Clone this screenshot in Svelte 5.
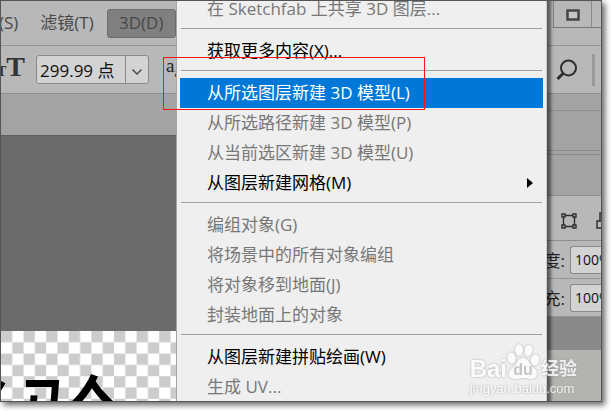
<script lang="ts">
  type Item = { label: string; enabled?: boolean; active?: boolean; submenu?: boolean };

  const groups: Item[][] = [
    [{ label: '在 Sketchfab 上共享 3D 图层...' }],
    [{ label: '获取更多内容(X)...', enabled: true }],
    [
      { label: '从所选图层新建 3D 模型(L)', enabled: true, active: true },
      { label: '从所选路径新建 3D 模型(P)' },
      { label: '从当前选区新建 3D 模型(U)' },
      { label: '从图层新建网格(M)', enabled: true, submenu: true },
    ],
    [
      { label: '编组对象(G)' },
      { label: '将场景中的所有对象编组' },
      { label: '将对象移到地面(J)' },
      { label: '封装地面上的对象' },
    ],
    [{ label: '从图层新建拼贴绘画(W)', enabled: true }, { label: '生成 UV...' }],
  ];

  let size = $state('299.99 点');
  let opacity = $state('100%');
  let fill = $state('100%');
</script>

<div class="window">
  <header class="menubar">
    <nav>
      <button class="top">(S)</button>
      <button class="top">滤镜(T)</button>
      <button class="top open">3D(D)</button>
    </nav>
    <div class="caption">
      <button class="restore" aria-label="还原">
        <svg width="14" height="12" viewBox="0 0 14 12">
          <rect x="1.5" y="1.5" width="11" height="9" fill="#c4c4c4" stroke="#444" stroke-width="2.500" />
        </svg>
      </button>
      <span class="edge"></span>
    </div>
  </header>

  <div class="options">
    <span class="type-icon"><small>T</small>T</span>
    <div class="combo">
      <input aria-label="字体大小" bind:value={size} />
      <button aria-label="选择字体大小">
        <svg width="12" height="8" viewBox="0 0 12 8">
          <path d="M1.500 1.500 6 6l4.500-4.500" fill="none" stroke="#444" stroke-width="1.400" />
        </svg>
      </button>
    </div>
    <span class="aa">a<sub>a</sub></span>
    <button class="search" aria-label="搜索">
      <svg width="22" height="22" viewBox="0 0 22 22" fill="none" stroke="#2e2e2e">
        <circle cx="12.500" cy="9" r="7.500" stroke-width="2" />
        <path d="M7 14.500 1.500 20" stroke-width="3" />
      </svg>
    </button>
    <span class="divider"></span>
  </div>

  <div class="body">
    <main>
      <div class="tabs"></div>
      <div class="stage"></div>
      <svg class="artboard" width="100%" height="70">
        <defs>
          <pattern id="checker" width="22.6" height="22.6" patternUnits="userSpaceOnUse">
            <rect width="22.6" height="22.6" fill="#fff" />
            <rect width="11.3" height="11.3" fill="#ccc" />
            <rect x="11.3" y="11.3" width="11.3" height="11.3" fill="#ccc" />
          </pattern>
        </defs>
        <rect width="100%" height="100%" fill="url(#checker)" />
        <text x="-92 18" y="135">经验</text>
      </svg>
    </main>

    <aside>
      <div class="panel-gap"></div>
      <div class="panel-empty"></div>
      <div class="panel-head"></div>
      <div class="filters">
        <svg width="16" height="16" viewBox="0 0 16 16" fill="#b8b8b8" stroke="#2e2e2e" stroke-width="1.400">
          <path d="M2.500 2.500h11v11h-11z" />
          <path d="M1 1h3v3H1zM12 1h3v3h-3zM1 12h3v3H1zM12 12h3v3h-3z" />
        </svg>
        <svg width="16" height="18" viewBox="0 0 16 18" fill="none" stroke="#2e2e2e" stroke-width="1.500">
          <path d="M4 9V1h7l4 4v11H9" />
          <path d="M1 9h7v7H1z" />
        </svg>
      </div>
      <div class="field">
        <label for="opacity">度:</label>
        <input id="opacity" bind:value={opacity} />
      </div>
      <div class="field">
        <label for="fill">充:</label>
        <input id="fill" bind:value={fill} />
      </div>
      <div class="list-head"></div>
      <div class="list"></div>
    </aside>
  </div>

  <div class="menu" role="menu">
    {#each groups as group, i}
      {#if i > 0}<hr />{/if}
      {#each group as item}
        <button class="item" class:active={item.active} role="menuitem" disabled={!item.enabled}>
          {item.label}
          {#if item.submenu}
            <svg width="6" height="10" viewBox="0 0 6 10"><path d="M0 0l6 5-6 5z" /></svg>
          {/if}
        </button>
      {/each}
    {/each}
  </div>

  <div class="marker"></div>

  <div class="watermark">
    <div class="brand">
      <span>Bai</span>
      <span class="paw">
        <svg width="32" height="36" viewBox="0 0 32 36" fill="#fff">
          <ellipse cx="4.500" cy="14" rx="4" ry="5.500" transform="rotate(-12 4.500 14)" />
          <ellipse cx="12" cy="6" rx="4" ry="5.800" />
          <ellipse cx="21.500" cy="6.500" rx="4" ry="5.500" transform="rotate(12 21.500 6.500)" />
          <ellipse cx="28" cy="16" rx="4" ry="5.500" transform="rotate(12 28 16)" />
          <path d="M16 14c4 0 5 3 7 6s7 5 7 9.500-4 6-7 5.500-4-1-7-1-4 .5-7 1-7-1-7-5.500 5-6.500 7-9.500 3-6 7-6z" />
        </svg>
        <b>du</b>
      </span>
      <span class="cn">经验</span>
    </div>
    <div class="site">jingyan.baidu.com</div>
  </div>
</div>

<style>
  :global(body) {
    background: #fff;
    font-family: "Open Sans", "Noto Sans CJK SC", sans-serif;
    font-size: 17px;
  }

  button,
  input {
    font: inherit;
    color: inherit;
    background: none;
    border: 0;
    padding: 0;
    margin: 0;
    box-sizing: border-box;
  }

  .window {
    position: relative;
    display: flex;
    flex-direction: column;
    box-sizing: border-box;
    height: calc(100vh - 9px);
    margin: 0 9px 9px 0;
    border: 1px solid #555;
    box-shadow: 3px 3px 6px rgba(0, 0, 0, 0.6);
    background: #b8b8b8;
    overflow: hidden;
  }

  .menubar {
    display: flex;
    justify-content: space-between;
    height: 45px;
    flex: none;
    box-sizing: border-box;
    border-bottom: 1px solid #949494;
    color: #484848;
  }

  nav {
    display: flex;
    align-items: center;
    margin-left: -4px;
  }

  .top {
    height: 29px;
    margin-right: 12px;
    line-height: 24px;
    white-space: nowrap;
  }

  .top:first-child {
    padding-left: 2px;
  }

  .top:nth-child(2) {
    padding-left: 10px;
  }

  .open {
    width: 69px;
    margin-left: 1px;
    border: 1px solid #6c6c6c;
    border-radius: 3px;
    background: #808080;
  }

  .caption {
    display: flex;
    height: 27px;
    box-sizing: border-box;
    border-bottom: 1px solid #777;
  }

  .restore {
    width: 39px;
    display: flex;
    align-items: center;
    justify-content: center;
    padding-top: 2px;
    border-left: 1px solid #888;
    border-right: 1px solid #888;
  }

  .edge {
    width: 9px;
  }

  .options {
    display: flex;
    align-items: center;
    height: 48px;
    flex: none;
    box-sizing: border-box;
    border-bottom: 1px solid #8e8e8e;
  }

  .type-icon {
    width: 35px;
    margin-left: -4px;
    box-sizing: border-box;
    font: bold 28px/30px "Liberation Serif", serif;
    color: #333;
    white-space: nowrap;
  }

  .type-icon small {
    font-size: 14px;
  }

  .combo {
    display: flex;
    width: 113px;
    height: 29px;
    margin-left: 4px;
    box-sizing: border-box;
    border: 1px solid #8a8a8a;
    border-radius: 3px;
    background: #d3d3d3;
    color: #111;
  }

  .combo input {
    flex: 1;
    min-width: 0;
    padding-left: 3px;
  }

  .combo button {
    width: 23px;
    border-left: 1px solid #8a8a8a;
  }

  .aa {
    margin-left: 17px;
    font: 19px/24px "Liberation Serif", serif;
    color: #222;
  }

  .aa sub {
    font-size: 14px;
  }

  .search {
    height: 22px;
    margin-left: auto;
  }

  .divider {
    width: 3px;
    height: 32px;
    margin: 0 6px 0 14px;
    background: #999;
  }

  .body {
    display: flex;
    flex: 1;
    min-height: 0;
  }

  main {
    flex: 1;
    display: flex;
    flex-direction: column;
    min-width: 0;
  }

  .tabs {
    height: 41px;
    background: #a3a3a3;
    border-bottom: 1px solid #5e5e5e;
  }

  .stage {
    flex: 1;
    background: #6b6b6b;
  }

  .artboard {
    display: block;
    flex: none;
  }

  .artboard text {
    font-family: "Noto Sans CJK SC", sans-serif;
    font-size: 108px;
    font-weight: 400;
  }

  aside {
    width: 72px;
    display: flex;
    flex-direction: column;
    background: #a3a3a3;
  }

  .panel-gap {
    height: 16px;
    border-bottom: 1px solid #8e8e8e;
  }

  .panel-empty {
    height: 39px;
    border-bottom: 1px solid #8a8a8a;
  }

  .panel-head {
    height: 40px;
    margin-top: 3px;
    border-top: 1px solid #8a8a8a;
    border-bottom: 1px solid #8e8e8e;
  }

  .filters {
    display: flex;
    align-items: center;
    gap: 19px;
    height: 45px;
    padding-left: 32px;
    padding-top: 5px;
    box-sizing: border-box;
    overflow: hidden;
    background: #b8b8b8;
    border-bottom: 1px solid #8e8e8e;
  }

  .filters svg {
    flex: none;
  }

  .field {
    display: flex;
    align-items: center;
    justify-content: flex-end;
    gap: 5px;
    height: 38px;
    box-sizing: border-box;
    background: #b8b8b8;
    border-bottom: 1px solid #949494;
    color: #222;
  }

  .field input {
    width: 31px;
    height: 28px;
    padding-left: 4px;
    border: 1px solid #8a8a8a;
    border-right: 0;
    border-radius: 3px 0 0 3px;
    background: #d3d3d3;
    color: #111;
    font-size: 14px;
  }

  .list-head {
    height: 33px;
    background: #8a8a8a;
  }

  .list {
    flex: 1;
    background: #b3b3b0;
  }

  .menu {
    position: absolute;
    top: -9px;
    left: 175px;
    right: 54px;
    bottom: -9px;
    padding: 1px 3px;
    border: 1px solid #a5a5a5;
    border-right-color: #ccc;
    background: #efefef;
    box-shadow: 4px 2px 3px rgba(0, 0, 0, 0.5);
  }

  .item {
    display: flex;
    align-items: center;
    justify-content: space-between;
    width: 100%;
    height: 30px;
    padding: 0 10px 0 27px;
    line-height: 30px;
    text-align: left;
    white-space: nowrap;
    color: #000;
  }

  .item:disabled {
    color: #777;
  }

  .item.active {
    background: #0078d7;
    color: #fff;
  }

  hr {
    height: 1px;
    margin: 4px 1px 7px;
    border: 0;
    background: #a0a0a0;
  }

  .marker {
    position: absolute;
    top: 56px;
    left: 162px;
    width: 262px;
    height: 53px;
    box-sizing: border-box;
    border: 1px solid #ff1414;
    pointer-events: none;
  }

  .watermark {
    position: absolute;
    right: 24px;
    bottom: 3px;
    opacity: 0.8;
    color: #fff;
    font-family: "Liberation Sans", "Noto Sans CJK SC", sans-serif;
    filter: drop-shadow(0 0 1px #999);
    pointer-events: none;
  }

  .brand {
    display: flex;
    align-items: flex-end;
    font-weight: bold;
    font-size: 24px;
    line-height: 22px;
  }

  .paw {
    position: relative;
    height: 36px;
  }

  .paw b {
    position: absolute;
    left: 0;
    right: 0;
    bottom: 1px;
    text-align: center;
    font-size: 16px;
    line-height: 18px;
    color: #bbb;
  }

  .cn {
    margin-left: 2px;
    font-size: 18px;
  }

  .site {
    font-size: 13px;
    line-height: 18px;
  }
</style>
